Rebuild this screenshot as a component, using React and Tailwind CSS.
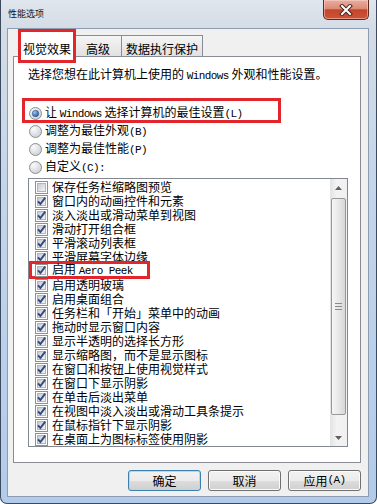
const cjk = "font-['Noto_Sans_CJK_SC',sans-serif]"

function L({ children }) {
    return <span className="font-['Liberation_Mono',monospace] text-[11px] tracking-[-0.6px]">{children}</span>
}

function Check({ checked = true }) {
    return (
        <svg width="13" height="13" viewBox="0 0 13 13" className="shrink-0">
            <defs>
                <linearGradient id="cbg" x1="0" y1="0" x2="1" y2="1">
                    <stop offset="0" stopColor="#c4c8cf" />
                    <stop offset="1" stopColor="#f4f5f7" />
                </linearGradient>
            </defs>
            <rect x="0.5" y="0.5" width="12" height="12" fill="#fff" stroke="#8e8f8f" />
            <rect x="2.5" y="2.5" width="8" height="8" fill="url(#cbg)" stroke="#b0b5bc" />
            {checked && <path d="M3 6.3 L5.4 9 L10.2 2.6" fill="none" stroke="#32497f" strokeWidth="1.9" />}
        </svg>
    )
}

function Radio({ on }) {
    return (
        <svg width="13" height="13" viewBox="0 0 13 13" className="shrink-0">
            <defs>
                <radialGradient id="rbg" cx="0.35" cy="0.3" r="0.9">
                    <stop offset="0" stopColor="#fbfbfb" />
                    <stop offset="1" stopColor="#c3c7cd" />
                </radialGradient>
                <radialGradient id="rdot" cx="0.35" cy="0.3" r="0.8">
                    <stop offset="0" stopColor="#9cc9f2" />
                    <stop offset="1" stopColor="#1d4f98" />
                </radialGradient>
            </defs>
            <circle cx="6.5" cy="6.5" r="6" fill="url(#rbg)" stroke="#8e8f8f" />
            {on && <circle cx="6.5" cy="6.5" r="3.2" fill="url(#rdot)" stroke="#24508f" strokeWidth="0.6" />}
        </svg>
    )
}

function CloseButton() {
    return (
        <div className="w-[46px] h-[20px] rounded-b-[5px] border border-t-0 border-[#5b2b23] bg-[linear-gradient(to_bottom,#e9ada0_0%,#dc8b78_45%,#c5452b_52%,#cd5536_100%)] shadow-[inset_0_0_0_1px_rgba(255,220,210,0.5)] flex items-center justify-center">
            <svg width="14" height="12" viewBox="0 0 14 12">
                <path d="M3 2 L11 10 M11 2 L3 10" stroke="#4a2420" strokeWidth="4" strokeLinecap="square" />
                <path d="M3 2 L11 10 M11 2 L3 10" stroke="#fff" strokeWidth="2" strokeLinecap="square" />
            </svg>
        </div>
    )
}

function Arrow({ up }) {
    return (
        <svg width="7" height="4" viewBox="0 0 7 4">
            <path d={up ? 'M0 4 L3.5 0 L7 4 Z' : 'M0 0 L3.5 4 L7 0 Z'} fill="#606060" />
        </svg>
    )
}

function Scrollbar() {
    return (
        <div className="w-[17px] flex flex-col bg-[linear-gradient(to_right,#e3e3e3,#f3f3f3_40%,#f0f0f0)]">
            <div className="h-[18px] flex items-center justify-center">
                <Arrow up />
            </div>
            <div className="h-[217px] mt-px mx-px rounded-[2px] border border-[#989898] bg-[linear-gradient(to_right,#f6f6f6,#e8e8e8_50%,#d7d7d7)] flex flex-col items-center justify-center gap-[2px]">
                <span className="w-[7px] h-px bg-[#8a8a8a]" />
                <span className="w-[7px] h-px bg-[#8a8a8a]" />
                <span className="w-[7px] h-px bg-[#8a8a8a]" />
            </div>
            <div className="flex-1" />
            <div className="h-[17px] flex items-center justify-center">
                <Arrow />
            </div>
        </div>
    )
}

const items = [
    { label: '保存任务栏缩略图预览', checked: false },
    { label: '窗口内的动画控件和元素' },
    { label: '淡入淡出或滑动菜单到视图' },
    { label: '滑动打开组合框' },
    { label: '平滑滚动列表框' },
    { label: '平滑屏幕字体边缘' },
    { label: <>启用 <L>Aero Peek</L></>, marked: true },
    { label: '启用透明玻璃' },
    { label: '启用桌面组合' },
    { label: '任务栏和「开始」菜单中的动画' },
    { label: '拖动时显示窗口内容' },
    { label: '显示半透明的选择长方形' },
    { label: '显示缩略图，而不是显示图标' },
    { label: '在窗口和按钮上使用视觉样式' },
    { label: '在窗口下显示阴影' },
    { label: '在单击后淡出菜单' },
    { label: '在视图中淡入淡出或滑动工具条提示' },
    { label: '在鼠标指针下显示阴影' },
    { label: '在桌面上为图标标签使用阴影' },
]

function Row({ item }) {
    if (item.marked) {
        return (
            <div className="relative z-10 -mt-[3px] -mb-px h-[18px] w-[121px] border-[3px] border-[#e3262b] bg-white pl-[3px] flex items-center gap-[4px] leading-[12px] whitespace-nowrap">
                <Check checked />
                <span>{item.label}</span>
            </div>
        )
    }
    return (
        <div className="h-[14px] pl-[6px] flex items-center gap-[4px] leading-[14px] whitespace-nowrap">
            <Check checked={item.checked !== false} />
            <span>{item.label}</span>
        </div>
    )
}

function Button({ children, primary }) {
    return (
        <button
            className={
                'w-[73px] h-[21px] rounded-[3px] border flex items-center justify-center leading-none bg-[linear-gradient(to_bottom,#f2f2f2_0%,#ebebeb_50%,#dddddd_51%,#cfcfcf_100%)] ' +
                (primary
                    ? 'border-[#3c7fb1] shadow-[inset_0_0_0_1px_#a9dcf6]'
                    : 'border-[#707070] shadow-[inset_0_0_0_1px_#fbfbfb]')
            }
        >
            {children}
        </button>
    )
}

export default function App() {
    return (
        <div className={`w-[377px] h-[504px] overflow-hidden text-[12px] text-black ${cjk}`}>
            <div className="w-full h-full flex flex-col rounded-b-[7px] border-x border-b border-[#3b4a5e] bg-[linear-gradient(to_bottom,#e0e6ed_0px,#d4dce6_28px,#c3d5ea_200px,#b3cbea_100%)]">
                <div className="h-[28px] shrink-0 flex justify-between items-start pl-[7px] pr-[7px]">
                    <span className="leading-[28px] text-[9px] text-[#111]">性能选项</span>
                    <CloseButton />
                </div>

                <div className="flex-1 ml-[6px] mr-[7px] mb-[6px] border border-[#8d9cb0] bg-[#f0f0f0] flex flex-col pl-[5px] pr-[7px]">
                    <div className="h-[27px] shrink-0 flex items-end pl-[6px]">
                        <div className="relative z-10 -mb-px h-[27px] w-[56px] border border-b-0 border-[#898c95] bg-white rounded-t-[2px] flex justify-center pt-[11px] leading-[14px]">
                            视觉效果
                            <span className="absolute -left-[2px] -top-[2px] -right-[2px] -bottom-[6px] border-[3px] border-[#e3262b]" />
                        </div>
                        <div className="h-[21px] w-[47px] border-t border-r border-[#898c95] bg-[linear-gradient(to_bottom,#f5f5f5,#e1e1e1)] flex justify-center pt-[6px] leading-[14px]">
                            高级
                        </div>
                        <div className="h-[21px] w-[81px] border-t border-r border-[#898c95] bg-[linear-gradient(to_bottom,#f5f5f5,#e1e1e1)] flex justify-center pt-[6px] leading-[14px]">
                            数据执行保护
                        </div>
                    </div>

                    <div className="h-[407px] shrink-0 border border-[#898c95] bg-white pl-[14px] pr-[12px] pt-[10px] flex flex-col">
                        <div className="h-[14px] leading-[14px] whitespace-nowrap">
                            选择您想在此计算机上使用的 <L>Windows</L> 外观和性能设置。
                        </div>

                        <div className="mt-[23px] flex flex-col">
                            <div className="relative h-[18px] pl-px flex items-center gap-[3px] whitespace-nowrap">
                                <Radio on />
                                <span>让 <L>Windows</L> 选择计算机的最佳设置<L>(L)</L></span>
                                <span className="absolute -left-[6px] -top-[6px] -bottom-px w-[259px] border-[3px] border-[#e3262b]" />
                            </div>
                            <div className="h-[18px] pl-px flex items-center gap-[3px]">
                                <Radio />
                                <span>调整为最佳外观<L>(B)</L></span>
                            </div>
                            <div className="h-[18px] pl-px flex items-center gap-[3px]">
                                <Radio />
                                <span>调整为最佳性能<L>(P)</L></span>
                            </div>
                            <div className="h-[18px] pl-px flex items-center gap-[3px]">
                                <Radio />
                                <span>自定义<L>(C):</L></span>
                            </div>
                        </div>

                        <div className="mt-[2px] h-[269px] border border-[#828790] bg-white flex">
                            <div className="flex-1 pt-px flex flex-col overflow-hidden">
                                {items.map((item, i) => (
                                    <Row key={i} item={item} />
                                ))}
                            </div>
                            <Scrollbar />
                        </div>
                    </div>

                    <div className="flex justify-end gap-[7px] pt-[7px]">
                        <Button primary>确定</Button>
                        <Button>取消</Button>
                        <Button>
                            应用<L>(A)</L>
                        </Button>
                    </div>
                </div>
            </div>
        </div>
    )
}
